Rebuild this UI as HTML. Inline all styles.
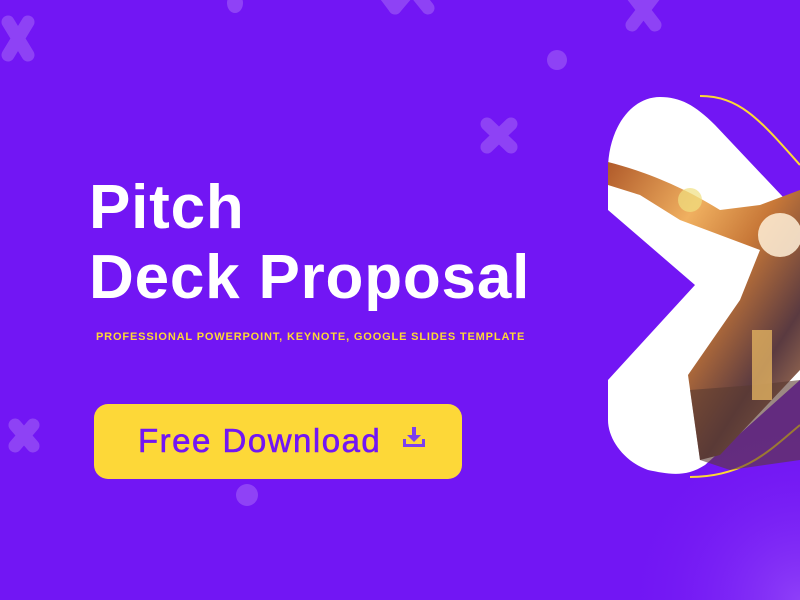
<!DOCTYPE html>
<html><head><meta charset="utf-8"><style>
*{margin:0;padding:0}
body{width:800px;height:600px;overflow:hidden;background:#7216f4;position:relative;font-family:"Liberation Sans",sans-serif}
.t{position:absolute;color:#fff;font-weight:bold;font-size:62px;left:89px;letter-spacing:0.8px;white-space:nowrap}
.sub{position:absolute;left:96px;top:331px;color:#fdd835;font-size:11px;font-weight:bold;letter-spacing:0.85px;white-space:nowrap}
.btn{position:absolute;left:94px;top:404px;width:368px;height:75px;border-radius:14px;background:#fdd838}
.btn span{position:absolute;left:44px;top:18px;color:#7216f4;font-size:33px;letter-spacing:1.5px;-webkit-text-stroke:0.6px #7216f4}
svg{position:absolute;left:0;top:0}
</style></head><body>
<svg width="800" height="600">
<defs>
<radialGradient id="glow" cx="800" cy="600" r="180" gradientUnits="userSpaceOnUse">
<stop offset="0" stop-color="#8e3ff8"/><stop offset="1" stop-color="#7216f4" stop-opacity="0"/></radialGradient>
<linearGradient id="ph" x1="0" y1="0" x2="1" y2="1">
<stop offset="0" stop-color="#b05a2a"/><stop offset="0.3" stop-color="#f0b060"/><stop offset="0.5" stop-color="#c87838"/><stop offset="0.75" stop-color="#5a3a40"/><stop offset="1" stop-color="#c89060"/></linearGradient>
</defs>
<rect width="800" height="600" fill="url(#glow)"/>
<g fill="#9b55f6" opacity="0.7">
<g stroke="#9b55f6" stroke-width="13" stroke-linecap="round">
<line x1="8" y1="22" x2="28" y2="55"/><line x1="28" y1="22" x2="8" y2="55"/>
<line x1="487" y1="124" x2="511" y2="147"/><line x1="511" y1="124" x2="487" y2="147"/>
<line x1="380" y1="-12" x2="395" y2="8"/><line x1="395" y1="8" x2="412" y2="-12"/><line x1="412" y1="-12" x2="428" y2="8"/>
<line x1="632" y1="-5" x2="655" y2="25"/><line x1="655" y1="-5" x2="632" y2="25"/>
<line x1="15" y1="425" x2="33" y2="446"/><line x1="33" y1="425" x2="15" y2="446"/>
</g>
<ellipse cx="235" cy="3" rx="8" ry="10"/><circle cx="557" cy="60" r="10"/>
<circle cx="247" cy="495" r="11"/>
</g>
<path d="M700 96 C740 96 760 120 800 165" stroke="#fdd835" stroke-width="2" fill="none"/>
<path d="M800 425 C770 450 745 477 690 477" stroke="#fdd835" stroke-width="2" fill="none"/>
<path d="M608 170 C608 130 630 97 660 97 C680 97 695 105 715 125 L800 215 L800 380 L705 465 C685 478 668 474 648 470 C625 462 608 440 608 420 L608 380 L695 285 L608 210 Z" fill="#fff"/>
<path d="M608 162 C640 170 680 185 720 210 L760 205 L800 190 L800 370 L720 455 L700 460 L688 375 L740 300 L760 250 L720 235 L680 220 L640 195 L608 185 Z" fill="url(#ph)"/>
<circle cx="780" cy="235" r="22" fill="#fff0d8" opacity="0.85"/>
<circle cx="690" cy="200" r="12" fill="#f0e080" opacity="0.7"/>
<path d="M755 385 L800 380 L800 460 L730 470 L700 460 L690 390 Z" fill="#5a3a30" opacity="0.6"/>
<rect x="752" y="330" width="20" height="70" fill="#e0b060" opacity="0.8"/>
</svg>
<div class="t" style="top:172px">Pitch</div>
<div class="t" style="top:242px">Deck Proposal</div>
<div class="sub">PROFESSIONAL POWERPOINT, KEYNOTE, GOOGLE SLIDES TEMPLATE</div>
<div class="btn"><span>Free Download</span></div>
<svg width="800" height="600"><g transform="translate(403,427)" fill="#7c3ff0">
<rect x="9" y="0" width="4" height="10"/><path d="M4 8 L18 8 L11 15 Z"/>
<path d="M0 12 L3 12 L3 17 L19 17 L19 12 L22 12 L22 20 L0 20 Z"/></g></svg>
</body></html>
